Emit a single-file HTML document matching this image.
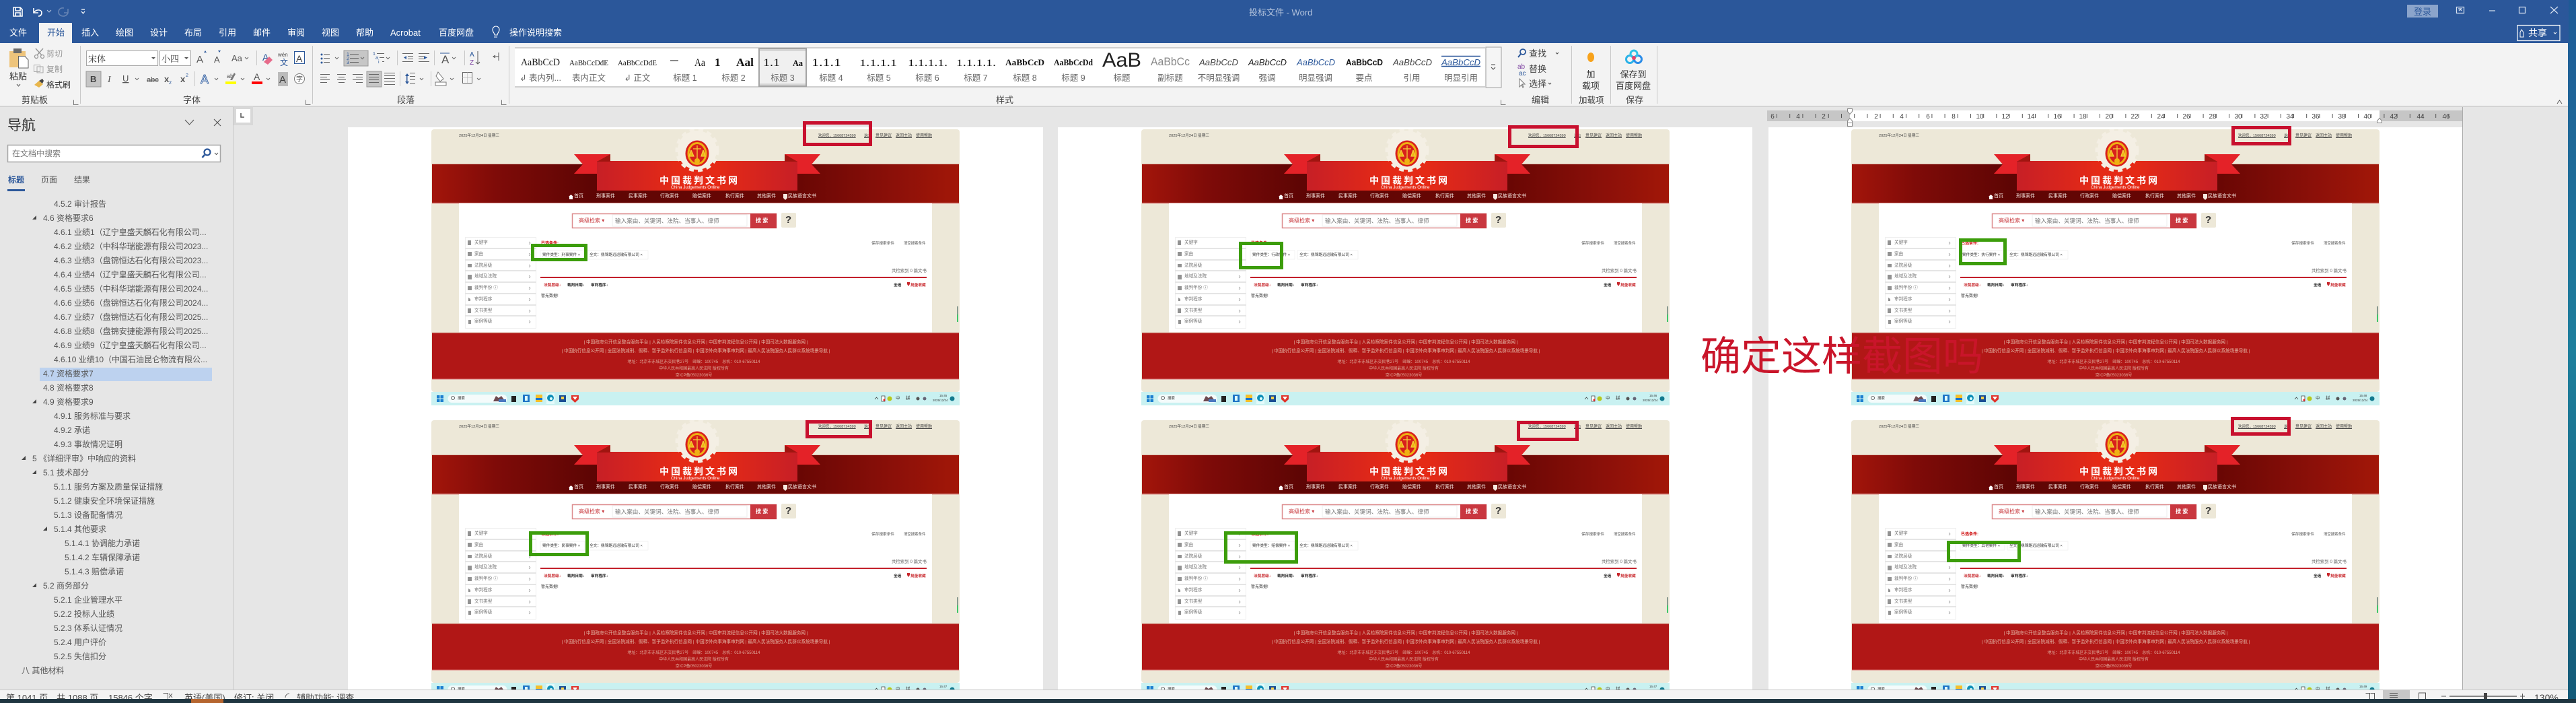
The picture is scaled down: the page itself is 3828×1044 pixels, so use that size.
<!DOCTYPE html>
<html lang="zh-CN"><head><meta charset="utf-8"><title>投标文件 - Word</title>
<style>
html,body{margin:0;padding:0}
body{position:relative;width:3828px;height:1044px;overflow:hidden;background:#e6e6e6;font-family:"Liberation Sans","Noto Sans CJK SC",sans-serif}
.p{position:absolute;top:189px;height:835px;background:#fff}
.k{position:absolute;width:785px;height:410px;filter:blur(.3px)}
.k svg{position:absolute;left:0;top:0}
.k i{position:absolute;white-space:nowrap;font-style:normal;line-height:10px;color:#444}
.a{left:41px;top:5px;font-size:5.6px}
.b{left:575px;top:5px;font-size:5.5px;text-decoration:underline}
.c{left:643px;top:5px;font-size:5px;text-decoration:underline}
.e{left:660px;top:5px;font-size:6px;text-decoration:underline}
.f{left:690px;top:5px;font-size:6px;text-decoration:underline}
.g{left:720px;top:5px;font-size:6px;text-decoration:underline}
.k .h{left:339px;top:71px;font-size:14px;letter-spacing:3px;color:#fff;font-weight:bold}
.k .j{left:356px;top:82px;font-size:6.3px;color:#fff}
.k .n{top:95px;font-size:7px;color:#f6e6e0}
.n1{left:212px}.n2{left:245px}.n3{left:293px}.n4{left:340px}.n5{left:388px}.n6{left:437px}.n7{left:484px}.n8{left:532px}
.k .l{left:219px;top:131px;font-size:8px;color:#c8383d}
.k .m{left:273px;top:131px;font-size:8.6px;color:#777}
.k .o{left:482px;top:131px;font-size:8px;color:#fff;font-weight:bold}
.k .q{left:526px;top:130px;font-size:15px;color:#333;font-weight:bold}
.k .s{left:64px;font-size:6.6px;color:#777}
.s1{top:164px}.s2{top:181px}.s3{top:198px}.s4{top:214px}.s5{top:231px}.s6{top:248px}.s7{top:265px}.s8{top:281px}
.k .r{left:163px;top:165px;font-size:6px;color:#c00;font-weight:bold}
.k .t{left:654px;top:165px;font-size:5.7px;color:#555}
.k .u{left:702px;top:165px;font-size:5.4px;color:#555}
.k .v{left:165px;top:182px;font-size:5.7px;color:#333}
.k .w{left:235px;top:182px;font-size:5.7px;color:#333}
.k .x{left:684px;top:206px;font-size:6.4px;color:#666}
.k .y{top:227px;font-size:5.7px;color:#222;font-weight:bold}
.y1{left:167px;color:#c8282d!important}.y2{left:202px}.y3{left:237px}.y4{left:687px}.y5{left:712px;color:#c8282d!important}
.k .z{left:163px;top:243px;font-size:6px;color:#333}
.k .F{left:0;width:786px;text-align:center;color:#e3b5a5;font-size:6.6px}
.F1{top:312px}.F2{top:325px}
.k .G{top:341px;font-size:6px;left:0;width:780px;text-align:center;color:#dfa89a}.G2{top:351px!important;font-size:6px}.G3{top:361px!important}
.k .T{font-size:5.4px;color:#333}
.T1{left:39px;top:395px}.T2{left:690px;top:395px;font-size:6.5px!important}.T3{left:705px;top:395px;font-size:6.5px!important}.T4{left:755px;top:391px;font-size:4.5px!important}.T5{left:745px;top:398px;font-size:4.5px!important}
.R,.Q{position:absolute;box-sizing:border-box;border:5px solid #c8102e}
.Q{border-color:#3c9d0b}
.big{position:absolute;left:2527px;top:495px;font-size:60px;line-height:70px;color:#c9152a;white-space:nowrap;font-family:"Liberation Sans","Noto Sans CJK SC",sans-serif}
#c{position:absolute;left:0;top:0}
</style></head><body>
<svg width="0" height="0" style="position:absolute"><defs>
<linearGradient id="bd" x1="0" x2="1" y1="0" y2="0"><stop offset="0" stop-color="#a3150b"/><stop offset=".12" stop-color="#7f0b08"/><stop offset=".3" stop-color="#5e0504"/><stop offset=".7" stop-color="#6a0704"/><stop offset=".88" stop-color="#8c1009"/><stop offset="1" stop-color="#a21708"/></linearGradient>
<linearGradient id="bn" x1="0" x2="1" y1="0" y2="0"><stop offset="0" stop-color="#c71f26"/><stop offset=".4" stop-color="#e52a16"/><stop offset=".6" stop-color="#e52a16"/><stop offset="1" stop-color="#c71f26"/></linearGradient>
<g id="S">
<rect width="785" height="390" rx="4" fill="#ede8d8"/>
<rect x="1" y="52" width="783" height="57" fill="url(#bd)"/><rect x="1" y="51" width="783" height="1" fill="#dcbcae"/><rect x="1" y="109" width="783" height="1.5" fill="#da8f8a"/>
<rect x="41" y="110" width="703" height="192" fill="#fff"/>
<path d="M212 37H266V66H212L225 52z" fill="#e42228"/><path d="M578 37H525V66H578L565 52z" fill="#e42228"/>
<rect x="246" y="47" width="298" height="44" fill="url(#bn)"/>
<path d="M246 48L266 37V48z" fill="#a01510"/><path d="M544 48L525 37V48z" fill="#a01510"/>
<circle cx="395" cy="31" r="29" fill="#f4efe4"/><circle cx="395" cy="31" r="30" fill="none" stroke="#f4efe4" stroke-width="5" stroke-dasharray="7 6"/>
<ellipse cx="395" cy="36" rx="17.5" ry="19.5" fill="#d8201c"/><ellipse cx="395" cy="36" rx="13" ry="15.5" fill="#d8201c" stroke="#efb112" stroke-width="3"/>
<path d="M395 24V44M389 29H401M386 31L383 40H390L386 31M404 31L401 40H407L404 31" fill="#efb112" stroke="#f4cf3a" stroke-width="1.3"/><circle cx="395" cy="47" r="4" fill="#efb112"/>
<path d="M204 100l3.5-3 3.5 3h-1v4h-5v-4z" fill="#fff"/><path d="M523 96h6v6l-3 3-3-3z" fill="#f5e8e0"/>
<rect x="209.500" y="125.500" width="303" height="21" fill="#fff" stroke="#dc8a8c" stroke-width="1.5"/><rect x="269" y="127" width="200" height="17" fill="#fff" stroke="#eee"/><rect x="474" y="125" width="39" height="22" fill="#c9373f"/><rect x="520" y="124" width="22" height="22" rx="2" fill="#ede8d8"/>
<path d="M50.500 160.500h105v135h-105z" fill="#fff" stroke="#eee"/>
<path d="M50 177H156M50 194H156M50 210H156M50 227H156M50 244H156M50 261H156M50 277H156" stroke="#e5e5e5" stroke-width="2"/>
<path d="M145 167l2 2-2 2M145 184l2 2-2 2M145 201l2 2-2 2M145 217l2 2-2 2M145 234l2 2-2 2M145 251l2 2-2 2M145 268l2 2-2 2M145 284l2 2-2 2" fill="none" stroke="#888" stroke-width=".7"/>
<path d="M54 165h5v7h-5zM54 182h6v6h-6zM54 200h6v5h-6zM54 216h6v7h-6zM54 233h6v6h-6zM55 250l3 2v3h-3zM54 266h5v7h-5zM55 283h4v6h-4z" fill="#777" opacity=".8"/>
<rect x="162" y="180" width="66" height="13" fill="#fff" stroke="#eee" stroke-width=".7"/><rect x="232" y="180" width="90" height="13" fill="#fff" stroke="#eee" stroke-width=".7"/>
<rect x="162" y="219" width="574" height="2" fill="#c3202b"/>
<path d="M707 227h4v3l-2 3-2-3z" fill="#c8282d"/>
<rect x="781" y="263" width="2" height="12" fill="#8a9a90"/><rect x="781" y="275" width="2" height="11" fill="#3fc76a"/>
<rect x="1" y="302" width="783" height="69" fill="#b11716"/><rect x="1" y="301.500" width="783" height="1" fill="#dba"/><rect x="1" y="370.500" width="783" height="1" fill="#d77"/>
<rect x="-1" y="390" width="787" height="20" fill="#c9f1f1"/>
<path d="M8 395h4.500v4.500H8zM13.500 395H18v4.500h-4.500zM8 400.500h4.500V405H8zM13.500 400.500H18V405h-4.500z" fill="#1c7fd0"/>
<rect x="24.500" y="394" width="88" height="12" rx="6" fill="#f4fbfb"/><circle cx="32" cy="399" r="2.500" fill="none" stroke="#444" stroke-width=".8"/>
<path d="M92 404l4-8 4 3 4-3 6 8z" fill="#6c4a50"/><rect x="100" y="401" width="11" height="4" fill="#4a78c0"/>
<rect x="119" y="396" width="7" height="9" fill="#222"/><rect x="136" y="394" width="10" height="11" fill="#1d74c6"/><rect x="139" y="396" width="4" height="7" fill="#dff"/>
<path d="M155 394h10v11h-10z" fill="#f5bf2c"/><rect x="155" y="399" width="10" height="3" fill="#1d74c6"/>
<rect x="171" y="392" width="12" height="16" fill="#e3fafa"/><circle cx="177" cy="399" r="5" fill="#0f8fb8"/><circle cx="178" cy="400" r="2" fill="#dff"/>
<rect x="190" y="395" width="10" height="10" fill="#1a4f94"/><rect x="193" y="397" width="4" height="4" fill="#ffd34a"/>
<path d="M208 395h11v6l-5.500 5-5.500-5z" fill="#e0332b"/><path d="M210 397h7l-3.500 5z" fill="#fff"/>
<path d="M659 401l2.500-3 2.500 3" fill="none" stroke="#333" stroke-width=".7"/><rect x="669" y="396" width="5" height="8" fill="#fff" stroke="#333" stroke-width=".7"/><circle cx="673" cy="402" r="1.500" fill="#e22"/><circle cx="681" cy="400" r="3.500" fill="#b7c81a"/><circle cx="723" cy="400" r="2.500" fill="#555"/><circle cx="733" cy="400" r="2.500" fill="#667"/><circle cx="774" cy="400" r="3.500" fill="#127a8f"/>
</g></defs></svg>

<div class="p" style="left:517px;width:1033px"></div>
<div class="p" style="left:1572px;width:1032px"></div>
<div class="p" style="left:2628px;width:1031px"></div>

<div class="k" style="left:641px;top:192px"><svg width="785" height="410"><use href="#S"/></svg>
<i class="a">2025年12月24日 星期三</i><i class="b">欢迎您，15668724590</i><i class="c">退出</i><i class="e">意见建议</i><i class="f">返回主站</i><i class="g">使用帮助</i><i class="h">中国裁判文书网</i><i class="j">China Judgements Online</i><i class="n n1">首页</i><i class="n n2">刑事案件</i><i class="n n3">民事案件</i><i class="n n4">行政案件</i><i class="n n5">赔偿案件</i><i class="n n6">执行案件</i><i class="n n7">其他案件</i><i class="n n8" style="left:530px">民族语言文书</i><i class="l">高级检索 ▾</i><i class="m">输入案由、关键词、法院、当事人、律师</i><i class="o">搜 索</i><i class="q">?</i><i class="s s1">关键字</i><i class="s s2">案由</i><i class="s s3">法院层级</i><i class="s s4">地域及法院</i><i class="s s5">裁判年份 ⓘ</i><i class="s s6">审判程序</i><i class="s s7">文书类型</i><i class="s s8">案例等级</i><i class="r">已选条件:</i><i class="t">保存搜索条件</i><i class="u">清空搜索条件</i><i class="v">案件类型：刑事案件 ×</i><i class="w">全文：鼎锦路远运输有限公司 ×</i><i class="x">共检索到 0 篇文书</i><i class="y y1">法院层级↓</i><i class="y y2">裁判日期↓</i><i class="y y3">审判程序↓</i><i class="y y4">全选</i><i class="y y5">批量收藏</i><i class="z">暂无数据!</i><i class="F F1">| 中国政府公开信息整合服务平台 | 人民检察院案件信息公开网 | 中国审判流程信息公开网 | 中国司法大数据服务网 |</i><i class="F F2">| 中国执行信息公开网 | 全国法院减刑、假释、暂予监外执行信息网 | 中国涉外商事海事审判网 | 最高人民法院服务人民群众系统场景导航 |</i><i class="G">地址：北京市东城区东交民巷27号　邮编：100745　总机：010-67550114</i><i class="G G2">中华人民共和国最高人民法院 版权所有</i><i class="G G3">京ICP备05023036号</i><i class="T T1">搜索</i><i class="T T2">中</i><i class="T T3">拼</i><i class="T T4">15:45</i><i class="T T5">2025/12/24</i></div>

<div class="k" style="left:1696px;top:192px"><svg width="785" height="410"><use href="#S"/></svg>
<i class="a">2025年12月24日 星期三</i><i class="b">欢迎您，15668724590</i><i class="c">退出</i><i class="e">意见建议</i><i class="f">返回主站</i><i class="g">使用帮助</i><i class="h">中国裁判文书网</i><i class="j">China Judgements Online</i><i class="n n1">首页</i><i class="n n2">刑事案件</i><i class="n n3">民事案件</i><i class="n n4">行政案件</i><i class="n n5">赔偿案件</i><i class="n n6">执行案件</i><i class="n n7">其他案件</i><i class="n n8" style="left:530px">民族语言文书</i><i class="l">高级检索 ▾</i><i class="m">输入案由、关键词、法院、当事人、律师</i><i class="o">搜 索</i><i class="q">?</i><i class="s s1">关键字</i><i class="s s2">案由</i><i class="s s3">法院层级</i><i class="s s4">地域及法院</i><i class="s s5">裁判年份 ⓘ</i><i class="s s6">审判程序</i><i class="s s7">文书类型</i><i class="s s8">案例等级</i><i class="r">已选条件:</i><i class="t">保存搜索条件</i><i class="u">清空搜索条件</i><i class="v">案件类型：行政案件 ×</i><i class="w">全文：鼎锦路远运输有限公司 ×</i><i class="x">共检索到 0 篇文书</i><i class="y y1">法院层级↓</i><i class="y y2">裁判日期↓</i><i class="y y3">审判程序↓</i><i class="y y4">全选</i><i class="y y5">批量收藏</i><i class="z">暂无数据!</i><i class="F F1">| 中国政府公开信息整合服务平台 | 人民检察院案件信息公开网 | 中国审判流程信息公开网 | 中国司法大数据服务网 |</i><i class="F F2">| 中国执行信息公开网 | 全国法院减刑、假释、暂予监外执行信息网 | 中国涉外商事海事审判网 | 最高人民法院服务人民群众系统场景导航 |</i><i class="G">地址：北京市东城区东交民巷27号　邮编：100745　总机：010-67550114</i><i class="G G2">中华人民共和国最高人民法院 版权所有</i><i class="G G3">京ICP备05023036号</i><i class="T T1">搜索</i><i class="T T2">中</i><i class="T T3">拼</i><i class="T T4">15:46</i><i class="T T5">2025/12/24</i></div>

<div class="k" style="left:2751px;top:192px"><svg width="785" height="410"><use href="#S"/></svg>
<i class="a">2025年12月24日 星期三</i><i class="b">欢迎您，15668724590</i><i class="c">退出</i><i class="e">意见建议</i><i class="f">返回主站</i><i class="g">使用帮助</i><i class="h">中国裁判文书网</i><i class="j">China Judgements Online</i><i class="n n1">首页</i><i class="n n2">刑事案件</i><i class="n n3">民事案件</i><i class="n n4">行政案件</i><i class="n n5">赔偿案件</i><i class="n n6">执行案件</i><i class="n n7">其他案件</i><i class="n n8" style="left:530px">民族语言文书</i><i class="l">高级检索 ▾</i><i class="m">输入案由、关键词、法院、当事人、律师</i><i class="o">搜 索</i><i class="q">?</i><i class="s s1">关键字</i><i class="s s2">案由</i><i class="s s3">法院层级</i><i class="s s4">地域及法院</i><i class="s s5">裁判年份 ⓘ</i><i class="s s6">审判程序</i><i class="s s7">文书类型</i><i class="s s8">案例等级</i><i class="r">已选条件:</i><i class="t">保存搜索条件</i><i class="u">清空搜索条件</i><i class="v">案件类型：执行案件 ×</i><i class="w">全文：鼎锦路远运输有限公司 ×</i><i class="x">共检索到 0 篇文书</i><i class="y y1">法院层级↓</i><i class="y y2">裁判日期↓</i><i class="y y3">审判程序↓</i><i class="y y4">全选</i><i class="y y5">批量收藏</i><i class="z">暂无数据!</i><i class="F F1">| 中国政府公开信息整合服务平台 | 人民检察院案件信息公开网 | 中国审判流程信息公开网 | 中国司法大数据服务网 |</i><i class="F F2">| 中国执行信息公开网 | 全国法院减刑、假释、暂予监外执行信息网 | 中国涉外商事海事审判网 | 最高人民法院服务人民群众系统场景导航 |</i><i class="G">地址：北京市东城区东交民巷27号　邮编：100745　总机：010-67550114</i><i class="G G2">中华人民共和国最高人民法院 版权所有</i><i class="G G3">京ICP备05023036号</i><i class="T T1">搜索</i><i class="T T2">中</i><i class="T T3">拼</i><i class="T T4">15:48</i><i class="T T5">2025/12/24</i></div>

<div class="k" style="left:641px;top:624px"><svg width="785" height="410"><use href="#S"/></svg>
<i class="a">2025年12月24日 星期三</i><i class="b">欢迎您，15668724590</i><i class="c">退出</i><i class="e">意见建议</i><i class="f">返回主站</i><i class="g">使用帮助</i><i class="h">中国裁判文书网</i><i class="j">China Judgements Online</i><i class="n n1">首页</i><i class="n n2">刑事案件</i><i class="n n3">民事案件</i><i class="n n4">行政案件</i><i class="n n5">赔偿案件</i><i class="n n6">执行案件</i><i class="n n7">其他案件</i><i class="n n8" style="left:530px">民族语言文书</i><i class="l">高级检索 ▾</i><i class="m">输入案由、关键词、法院、当事人、律师</i><i class="o">搜 索</i><i class="q">?</i><i class="s s1">关键字</i><i class="s s2">案由</i><i class="s s3">法院层级</i><i class="s s4">地域及法院</i><i class="s s5">裁判年份 ⓘ</i><i class="s s6">审判程序</i><i class="s s7">文书类型</i><i class="s s8">案例等级</i><i class="r">已选条件:</i><i class="t">保存搜索条件</i><i class="u">清空搜索条件</i><i class="v">案件类型：民事案件 ×</i><i class="w">全文：鼎锦路远运输有限公司 ×</i><i class="x">共检索到 0 篇文书</i><i class="y y1">法院层级↓</i><i class="y y2">裁判日期↓</i><i class="y y3">审判程序↓</i><i class="y y4">全选</i><i class="y y5">批量收藏</i><i class="z">暂无数据!</i><i class="F F1">| 中国政府公开信息整合服务平台 | 人民检察院案件信息公开网 | 中国审判流程信息公开网 | 中国司法大数据服务网 |</i><i class="F F2">| 中国执行信息公开网 | 全国法院减刑、假释、暂予监外执行信息网 | 中国涉外商事海事审判网 | 最高人民法院服务人民群众系统场景导航 |</i><i class="G">地址：北京市东城区东交民巷27号　邮编：100745　总机：010-67550114</i><i class="G G2">中华人民共和国最高人民法院 版权所有</i><i class="G G3">京ICP备05023036号</i><i class="T T1">搜索</i><i class="T T2">中</i><i class="T T3">拼</i><i class="T T4">15:47</i><i class="T T5">2025/12/24</i></div>

<div class="k" style="left:1696px;top:624px"><svg width="785" height="410"><use href="#S"/></svg>
<i class="a">2025年12月24日 星期三</i><i class="b">欢迎您，15668724590</i><i class="c">退出</i><i class="e">意见建议</i><i class="f">返回主站</i><i class="g">使用帮助</i><i class="h">中国裁判文书网</i><i class="j">China Judgements Online</i><i class="n n1">首页</i><i class="n n2">刑事案件</i><i class="n n3">民事案件</i><i class="n n4">行政案件</i><i class="n n5">赔偿案件</i><i class="n n6">执行案件</i><i class="n n7">其他案件</i><i class="n n8" style="left:530px">民族语言文书</i><i class="l">高级检索 ▾</i><i class="m">输入案由、关键词、法院、当事人、律师</i><i class="o">搜 索</i><i class="q">?</i><i class="s s1">关键字</i><i class="s s2">案由</i><i class="s s3">法院层级</i><i class="s s4">地域及法院</i><i class="s s5">裁判年份 ⓘ</i><i class="s s6">审判程序</i><i class="s s7">文书类型</i><i class="s s8">案例等级</i><i class="r">已选条件:</i><i class="t">保存搜索条件</i><i class="u">清空搜索条件</i><i class="v">案件类型：赔偿案件 ×</i><i class="w">全文：鼎锦路远运输有限公司 ×</i><i class="x">共检索到 0 篇文书</i><i class="y y1">法院层级↓</i><i class="y y2">裁判日期↓</i><i class="y y3">审判程序↓</i><i class="y y4">全选</i><i class="y y5">批量收藏</i><i class="z">暂无数据!</i><i class="F F1">| 中国政府公开信息整合服务平台 | 人民检察院案件信息公开网 | 中国审判流程信息公开网 | 中国司法大数据服务网 |</i><i class="F F2">| 中国执行信息公开网 | 全国法院减刑、假释、暂予监外执行信息网 | 中国涉外商事海事审判网 | 最高人民法院服务人民群众系统场景导航 |</i><i class="G">地址：北京市东城区东交民巷27号　邮编：100745　总机：010-67550114</i><i class="G G2">中华人民共和国最高人民法院 版权所有</i><i class="G G3">京ICP备05023036号</i><i class="T T1">搜索</i><i class="T T2">中</i><i class="T T3">拼</i><i class="T T4">15:47</i><i class="T T5">2025/12/24</i></div>

<div class="k" style="left:2751px;top:624px"><svg width="785" height="410"><use href="#S"/></svg>
<i class="a">2025年12月24日 星期三</i><i class="b">欢迎您，15668724590</i><i class="c">退出</i><i class="e">意见建议</i><i class="f">返回主站</i><i class="g">使用帮助</i><i class="h">中国裁判文书网</i><i class="j">China Judgements Online</i><i class="n n1">首页</i><i class="n n2">刑事案件</i><i class="n n3">民事案件</i><i class="n n4">行政案件</i><i class="n n5">赔偿案件</i><i class="n n6">执行案件</i><i class="n n7">其他案件</i><i class="n n8" style="left:530px">民族语言文书</i><i class="l">高级检索 ▾</i><i class="m">输入案由、关键词、法院、当事人、律师</i><i class="o">搜 索</i><i class="q">?</i><i class="s s1">关键字</i><i class="s s2">案由</i><i class="s s3">法院层级</i><i class="s s4">地域及法院</i><i class="s s5">裁判年份 ⓘ</i><i class="s s6">审判程序</i><i class="s s7">文书类型</i><i class="s s8">案例等级</i><i class="r">已选条件:</i><i class="t">保存搜索条件</i><i class="u">清空搜索条件</i><i class="v">案件类型：其他案件 ×</i><i class="w">全文：鼎锦路远运输有限公司 ×</i><i class="x">共检索到 0 篇文书</i><i class="y y1">法院层级↓</i><i class="y y2">裁判日期↓</i><i class="y y3">审判程序↓</i><i class="y y4">全选</i><i class="y y5">批量收藏</i><i class="z">暂无数据!</i><i class="F F1">| 中国政府公开信息整合服务平台 | 人民检察院案件信息公开网 | 中国审判流程信息公开网 | 中国司法大数据服务网 |</i><i class="F F2">| 中国执行信息公开网 | 全国法院减刑、假释、暂予监外执行信息网 | 中国涉外商事海事审判网 | 最高人民法院服务人民群众系统场景导航 |</i><i class="G">地址：北京市东城区东交民巷27号　邮编：100745　总机：010-67550114</i><i class="G G2">中华人民共和国最高人民法院 版权所有</i><i class="G G3">京ICP备05023036号</i><i class="T T1">搜索</i><i class="T T2">中</i><i class="T T3">拼</i><i class="T T4">15:49</i><i class="T T5">2025/12/24</i></div>

<div class="R" style="left:1193px;top:180px;width:103px;height:37px"></div>
<div class="Q" style="left:789px;top:362px;width:84px;height:26px"></div>
<div class="R" style="left:2241px;top:186px;width:105px;height:34px"></div>
<div class="Q" style="left:1841px;top:359px;width:66px;height:41px"></div>
<div class="R" style="left:3316px;top:187px;width:89px;height:29px"></div>
<div class="Q" style="left:2911px;top:354px;width:71px;height:40px"></div>
<div class="R" style="left:1197px;top:624px;width:99px;height:27px"></div>
<div class="Q" style="left:786px;top:789px;width:89px;height:37px"></div>
<div class="R" style="left:2254px;top:625px;width:92px;height:30px"></div>
<div class="Q" style="left:1819px;top:789px;width:110px;height:48px"></div>
<div class="R" style="left:3315px;top:619px;width:89px;height:28px"></div>
<div class="Q" style="left:2893px;top:803px;width:110px;height:32px"></div>
<div class="big">确定这样截图吗</div>

<svg id="c" width="3828" height="1044" font-family="'Liberation Sans','Noto Sans CJK SC',sans-serif">
<defs><linearGradient id="wp" x1="0" y1="0" x2="0" y2="1"><stop offset="0" stop-color="#1f5a96"/><stop offset=".5" stop-color="#1e7f9c"/><stop offset="1" stop-color="#145a78"/></linearGradient></defs>
<rect x="0" y="158" width="3828" height="31" fill="#e6e6e6" opacity="0"/>
<!-- gray over page top -->
<rect x="3659" y="158" width="1" height="866" fill="#ababab"/>
<rect x="3816" y="0" width="12" height="1044" fill="url(#wp)"/>
<!-- title bar -->
<rect width="3817" height="64" fill="#2b579a"/>
<rect y="64" width="3816" height="94" fill="#f3f3f3"/><rect y="157" width="3816" height="2" fill="#d4d4d4"/>
<rect x="58" y="34" width="49" height="30" fill="#f3f3f3"/>
<g fill="none" stroke="#fff" stroke-width="1.6">
<path d="M20 11H30L33 14V24H20zM23 11V16H30V11M23 24V19H30V24"/>
<path d="M50 12V19H57M50 19C54 13 62 14 62 19C62 22 60 24 57 24"/><path d="M70 15l3 3 3-3" stroke-width="1" stroke="#b8c8e0"/>
<path d="M121 14H126M121 17l2.500 3 2.500-3" stroke-width="1.200"/>
</g>
<path d="M101 13V19H95M95 12C89 11 87 15 87 18C87 22 91 24 94 24C98 24 101 21 101 18" fill="none" stroke="#6684b4" stroke-width="1.6"/>
<g font-size="13" fill="#fff">
<text x="14" y="53">文件</text><text x="70" y="53" fill="#2b579a">开始</text><text x="121" y="53">插入</text><text x="172" y="53">绘图</text><text x="223" y="53">设计</text><text x="274" y="53">布局</text><text x="325" y="53">引用</text><text x="376" y="53">邮件</text><text x="427" y="53">审阅</text><text x="478" y="53">视图</text><text x="529" y="53">帮助</text><text x="580" y="53">Acrobat</text><text x="652" y="53">百度网盘</text><text x="757" y="53">操作说明搜索</text>
</g>
<path d="M734 55h5M735 52c0-3-3-4-3-8a5 5 0 0 1 10 0c0 4-3 5-3 8z" fill="none" stroke="#fff" stroke-width="1.100"/>
<text x="1856" y="23" font-size="13" fill="#b3c3dc">投标文件  -  Word</text>
<rect x="3577" y="7" width="46" height="19" fill="#8ba4cb"/><text x="3587" y="22" font-size="13" fill="#2b579a">登录</text>
<g fill="none" stroke="#dbe4f1" stroke-width="1.200"><path d="M3650.500 10.500h11v9h-11zM3653 13h6M3654 16l2-2 2 2"/><path d="M3699 16h9"/><path d="M3743.500 10.500h9v9h-9z"/><path d="M3790 10l11 10M3801 10l-11 10"/><rect x="3741" y="37.500" width="63" height="23" stroke="#fff"/></g>
<text x="3757" y="54" font-size="14" fill="#fff">共享</text><path d="M3747 44l3 4v7h-5v-7z" fill="none" stroke="#fff"/><path d="M3795 48l2 2 2-2" stroke="#fff" fill="none"/>
<!-- ribbon separators -->
<path d="M119.500 68V154M464.500 68V154M756.500 68V154M2335.500 68V154M2393.500 68V154M2462.500 68V154M381.500 75V97M289.500 106V128M590.500 75V97M645.500 75V97M690.500 75V97M594.500 106V128M640.500 106V128" stroke="#c8c8c8"/>
<!-- clipboard -->
<rect x="14" y="76" width="24" height="24" fill="#eec47b"/><rect x="20" y="72" width="12" height="7" fill="#6b6b6b"/><path d="M27.500 83.500H37L42 89V101H27.500z" fill="#fff" stroke="#666"/>
<text x="14" y="118" font-size="13" fill="#333">粘贴</text>
<path d="M25 125l2.500 3 2.500-3" fill="none" stroke="#555"/>
<path d="M53 72l9 10M64 72l-9 10" stroke="#999" stroke-width="1.500"/><circle cx="54" cy="84" r="2.500" fill="none" stroke="#999" stroke-width="1.300"/><circle cx="63" cy="84" r="2.500" fill="none" stroke="#999" stroke-width="1.300"/>
<path d="M50.500 96.500h9v10h-9zM55 99h9v9h-9z" fill="#f3f3f3" stroke="#aaa"/>
<path d="M51 126l7-6 6 5-6 5z" fill="#e8b64c"/><path d="M58 120l5-3 2 3-2 4z" fill="#444"/>
<text x="69" y="84" font-size="12" fill="#999">剪切</text><text x="69" y="107" font-size="12" fill="#999">复制</text><text x="69" y="130" font-size="12" fill="#333">格式刷</text>
<!-- font -->
<rect x="128.500" y="75.500" width="106" height="22" fill="#fff" stroke="#a6a6a6"/><rect x="237.500" y="75.500" width="46" height="22" fill="#fff" stroke="#a6a6a6"/>
<text x="131" y="92" font-size="13" fill="#333" font-family="'Noto Serif CJK SC',serif">宋体</text><text x="240" y="92" font-size="13" fill="#333" font-family="'Noto Serif CJK SC',serif">小四</text>
<path d="M225 85l3 3 3-3zM274 85l3 3 3-3z" fill="#555"/>
<g font-size="15" fill="#555"><text x="292" y="93">A</text><text x="318" y="93" font-size="13">A</text><text x="344" y="91" font-size="13">Aa</text></g>
<path d="M303 78l2-3 2 3zM324 75l2 3 2-3z" fill="#2b579a"/>
<text x="390" y="90" font-size="14" fill="#2b579a">A</text><path d="M392 92l8-8 5 5-7 7z" fill="#e66a8a"/>
<text x="413" y="84" font-size="8" fill="#444">wén</text><text x="416" y="97" font-size="12" fill="#2b579a">文</text>
<rect x="437.500" y="76.500" width="15" height="18" fill="#fff" stroke="#2b579a"/><text x="440" y="92" font-size="14" fill="#444">A</text>
<rect x="128" y="106" width="22" height="23" fill="#c6c6c6" stroke="#9a9a9a"/><text x="134" y="122" font-size="13" font-weight="bold" fill="#444">B</text>
<text x="160" y="122" font-size="14" font-style="italic" fill="#555" font-family="'Liberation Serif',serif">I</text>
<text x="182" y="121" font-size="13" fill="#555" text-decoration="underline">U</text>
<text x="218" y="122" font-size="11" fill="#555" text-decoration="line-through">abc</text>
<text x="244" y="122" font-size="13" font-weight="bold" fill="#555">x</text><text x="251" y="125" font-size="7" fill="#2b579a">2</text>
<text x="268" y="122" font-size="13" font-weight="bold" fill="#555">x</text><text x="276" y="114" font-size="7" fill="#2b579a">2</text>
<text x="298" y="124" font-size="18" fill="#dbe7f5" stroke="#2b579a" stroke-width=".8">A</text>
<text x="337" y="116" font-size="9" fill="#555">ab</text><path d="M342 119l6-11 2 2-5 9z" fill="#777"/><rect x="335" y="121" width="16" height="4" fill="#ff0"/>
<text x="377" y="119" font-size="14" fill="#555">A</text><rect x="374" y="121" width="16" height="4" fill="#f00"/>
<rect x="413" y="107" width="15" height="21" fill="#bbb"/><text x="415" y="123" font-size="15" fill="#444">A</text>
<circle cx="445" cy="117" r="7.500" fill="#fff" stroke="#777"/><text x="440" y="121" font-size="10" fill="#555">字</text>
<!-- paragraph -->
<rect x="511" y="75" width="36" height="23" fill="#c6c6c6" stroke="#9a9a9a"/><rect x="545" y="106" width="22" height="23" fill="#c6c6c6" stroke="#9a9a9a"/>
<g fill="none" stroke="#666"><path d="M481 80.500h9M481 86.500h9M481 92.500h9M520 80.500h13M520 86.500h13M520 92.500h13M560 79.500h11M564 85.500h7M568 91.500h3M598 79.500h16M606 83.500h8M606 87.500h8M598 91.500h16M622 79.500h16M622 83.500h8M622 87.500h8M622 91.500h16"/>
<path d="M476 110.500h14M476 114.500h10M476 118.500h14M476 122.500h10M501 110.500h13M503 114.500h9M501 118.500h13M503 122.500h9M524 110.500h15M529 114.500h10M524 118.500h15M529 122.500h10M548 110.500h15M548 114.500h15M548 118.500h15M548 122.500h15M571 108.500h16M571 112.500h16M571 116.500h16M571 120.500h16M571 125.500h16M609 108.500h8M609 113.500h8M609 118.500h8M609 123.500h8M687.500 107.500h14v16h-14z" stroke-dasharray="none"/></g>
<g fill="#2b579a"><circle cx="478" cy="81" r="1.500"/><circle cx="478" cy="87" r="1.500"/><circle cx="478" cy="93" r="1.500"/><path d="M604 83l-4 2.500 4 2.500zM630 83l5 2.500-5 2.500z"/><path d="M605 109l-3 4h6zM605 125l-3-4h6z"/><rect x="604" y="112" width="1.500" height="10"/></g>
<g font-size="7" fill="#2b579a"><text x="515" y="83">1</text><text x="515" y="89">2</text><text x="515" y="95">3</text><text x="554" y="82">1</text><text x="558" y="88">a</text><text x="562" y="94">i</text></g>
<text x="656" y="94" font-size="17" fill="#555">A</text><path d="M654 79h14" stroke="#2b579a"/><text x="698" y="84" font-size="10" fill="#2b579a">A</text><text x="698" y="96" font-size="10" fill="#7b3fa0">Z</text><path d="M710 76v19m-3-3l3 3 3-3" fill="none" stroke="#555"/><path d="M741 78v12M741 84h-7m2-2l-3 2 3 2" fill="none" stroke="#555"/>
<path d="M651 107l8 10-5 4-6-8zM647 122h16v5h-16z" fill="#fff" stroke="#777"/><path d="M687.500 115.500h14M694.500 107.500v16" stroke="#aaa" stroke-dasharray="1 1"/>
<path fill="none" stroke="#666" d="M498 85l2.500 2.500L503 85M536 85l2.500 2.500L541 85M574 85l2.500 2.500L579 85M672 85l2.500 2.500L677 85M624 116l2.500 2.500L629 116M669 116l2.500 2.500L674 116M709 116l2.500 2.500L714 116M201 116l2.500 2.500L206 116M319 116l2.500 2.500L324 116M358 116l2.500 2.500L363 116M396 116l2.500 2.500L401 116M364 85l2.500 2.500L369 85"/>
<!-- launchers & group labels -->
<path d="M109.500 148.500v7h7M454.500 148.500v7h7M745.500 148.500v7h7M2230.500 148.500v7h7" fill="none" stroke="#777"/>
<g font-size="13" fill="#444"><text x="32" y="153">剪贴板</text><text x="272" y="153">字体</text><text x="590" y="153">段落</text><text x="1480" y="153">样式</text><text x="2276" y="153">编辑</text><text x="2346" y="153" font-size="12.500">加载项</text><text x="2416" y="153">保存</text></g>
<!-- styles gallery -->
<rect x="765" y="71" width="1442" height="58" fill="#fff"/><path d="M765 71h1442M765 129h1442" stroke="#cfcfcf" stroke-width="2"/>
<rect x="2208" y="70" width="23" height="60" fill="#f5f5f5" stroke="#a0a0a0"/><path d="M2216 96h6M2216 100l3 3 3-3" fill="none" stroke="#444"/>
<rect x="1128" y="72" width="70" height="56" fill="#f0f0f0" stroke="#a4a4a4" stroke-width="2"/><rect x="1129" y="73" width="68" height="3" fill="#d6d6d6"/><rect x="1129" y="124" width="68" height="3" fill="#d6d6d6"/>
<g font-family="'Liberation Serif',serif" fill="#111">
<text x="774" y="97" font-size="15" textLength="58" lengthAdjust="spacingAndGlyphs">AaBbCcD</text>
<text x="846" y="97" font-size="12" textLength="58" lengthAdjust="spacingAndGlyphs">AaBbCcDdE</text>
<text x="918" y="97" font-size="12" textLength="58" lengthAdjust="spacingAndGlyphs">AaBbCcDdE</text>
<text x="1032" y="98" font-size="16" textLength="16" lengthAdjust="spacingAndGlyphs">Aa</text><path d="M996 90h12" stroke="#111"/>
<text x="1062" y="98" font-size="17" font-weight="bold">1</text><text x="1094" y="98" font-size="17" font-weight="bold" textLength="26" lengthAdjust="spacingAndGlyphs">Aal</text>
<text x="1134" y="98" font-size="16" textLength="25" lengthAdjust="spacingAndGlyphs">1.1</text><text x="1178" y="98" font-size="13" font-weight="bold" textLength="15" lengthAdjust="spacingAndGlyphs">Aa</text>
<text x="1206" y="98" font-size="16" textLength="44" lengthAdjust="spacingAndGlyphs">1.1.1</text>
<text x="1277" y="98" font-size="15" textLength="56" lengthAdjust="spacingAndGlyphs">1.1.1.1</text>
<text x="1349" y="98" font-size="15" textLength="59" lengthAdjust="spacingAndGlyphs">1.1.1.1.</text>
<text x="1421" y="98" font-size="15" textLength="59" lengthAdjust="spacingAndGlyphs">1.1.1.1.</text>
<text x="1494" y="97" font-size="13" font-weight="bold" textLength="58" lengthAdjust="spacingAndGlyphs">AaBbCcD</text>
<text x="1566" y="97" font-size="13" font-weight="bold" textLength="58" lengthAdjust="spacingAndGlyphs">AaBbCcDd</text></g>
<g font-family="'Liberation Sans',sans-serif">
<text x="1638" y="99" font-size="30" fill="#222" textLength="58" lengthAdjust="spacingAndGlyphs" font-weight="normal">AaB</text>
<text x="1710" y="97" font-size="17" fill="#888" textLength="58" lengthAdjust="spacingAndGlyphs">AaBbCc</text>
<g font-size="13" font-style="italic">
<text x="1782" y="97" fill="#444" textLength="58" lengthAdjust="spacingAndGlyphs">AaBbCcD</text>
<text x="1855" y="97" fill="#222" textLength="57" lengthAdjust="spacingAndGlyphs">AaBbCcD</text>
<text x="1927" y="97" fill="#2b579a" textLength="57" lengthAdjust="spacingAndGlyphs">AaBbCcD</text>
<text x="2000" y="97" fill="#111" font-weight="bold" font-style="normal" textLength="55" lengthAdjust="spacingAndGlyphs">AaBbCcD</text>
<text x="2070" y="97" fill="#444" textLength="58" lengthAdjust="spacingAndGlyphs">AaBbCcD</text>
<text x="2142" y="97" fill="#2b579a" textLength="58" lengthAdjust="spacingAndGlyphs">AaBbCcD</text></g></g>
<path d="M2142 83.500h58M2142 98.500h58" stroke="#2b579a" stroke-width="1.500"/>
<g font-size="12.500" fill="#666" text-anchor="middle">
<text x="803" y="120">↲ 表内列...</text><text x="875" y="120">表内正文</text><text x="947" y="120">↲ 正文</text><text x="1018" y="120">标题 1</text><text x="1090" y="120">标题 2</text><text x="1163" y="120">标题 3</text><text x="1235" y="120">标题 4</text><text x="1306" y="120">标题 5</text><text x="1378" y="120">标题 6</text><text x="1450" y="120">标题 7</text><text x="1523" y="120">标题 8</text><text x="1595" y="120">标题 9</text><text x="1667" y="120">标题</text><text x="1739" y="120">副标题</text><text x="1811" y="120">不明显强调</text><text x="1883" y="120">强调</text><text x="1955" y="120">明显强调</text><text x="2027" y="120">要点</text><text x="2098" y="120">引用</text><text x="2171" y="120">明显引用</text></g>
<!-- edit -->
<circle cx="2263" cy="77" r="4" fill="none" stroke="#2b579a" stroke-width="1.800"/><path d="M2260 80l-4 5" stroke="#2b579a" stroke-width="2"/>
<text x="2272" y="84" font-size="13" fill="#444">查找</text><path d="M2312 78l2 2 2-2" fill="none" stroke="#444"/>
<text x="2255" y="102" font-size="10" fill="#7b3fa0">ab</text><text x="2257" y="112" font-size="10" fill="#2b579a">ac</text><text x="2272" y="107" font-size="13" fill="#444">替换</text>
<path d="M2258 117v12l3-3 2 4 1-1-2-4h4z" fill="#fff" stroke="#777"/><text x="2272" y="129" font-size="13" fill="#444">选择</text><path d="M2301 123l2 2 2-2" fill="none" stroke="#444"/>
<ellipse cx="2364" cy="85" rx="5" ry="7" fill="#f7a21b"/><text x="2364" y="115" font-size="13" fill="#333" text-anchor="middle">加</text><text x="2364" y="132" font-size="13" fill="#333" text-anchor="middle">载项</text>
<g fill="none" stroke-width="3"><circle cx="2422" cy="88" r="5.500" stroke="#2bb2e8"/><circle cx="2434" cy="88" r="5.500" stroke="#2b8ce8"/><circle cx="2428" cy="80" r="5" stroke="#2fc4e8"/></g><circle cx="2428" cy="86" r="3" fill="#e8446a"/>
<text x="2427" y="115" font-size="13" fill="#333" text-anchor="middle">保存到</text><text x="2427" y="132" font-size="13" fill="#333" text-anchor="middle">百度网盘</text>
<path d="M3800 154l3.500-5 3.500 5" fill="none" stroke="#555"/>
<!-- ruler -->
<rect x="2626" y="164" width="1033" height="16" fill="#fff"/><rect x="2626" y="164" width="123" height="16" fill="#c6c6c6"/><rect x="3536" y="164" width="123" height="16" fill="#c6c6c6"/>
<path d="M2640 172H3650" stroke="#555" stroke-width="6" stroke-dasharray="1 18.200" stroke-dashoffset="0"/>
<g font-size="10" fill="#444" text-anchor="middle"><text x="2634" y="176">6</text><text x="2672" y="176">4</text><text x="2710" y="176">2</text><text x="2788" y="176">2</text><text x="2826" y="176">4</text><text x="2865" y="176">6</text><text x="2903" y="176">8</text><text x="2942" y="176">10</text><text x="2980" y="176">12</text><text x="3018" y="176">14</text><text x="3057" y="176">16</text><text x="3095" y="176">18</text><text x="3134" y="176">20</text><text x="3172" y="176">22</text><text x="3211" y="176">24</text><text x="3249" y="176">26</text><text x="3288" y="176">28</text><text x="3326" y="176">30</text><text x="3364" y="176">32</text><text x="3403" y="176">34</text><text x="3441" y="176">36</text><text x="3480" y="176">38</text><text x="3518" y="176">40</text><text x="3557" y="176">42</text><text x="3597" y="176">44</text><text x="3635" y="176">46</text></g>
<path d="M2745.500 161.500h7v4l-3.500 4-3.500-4zM2745.500 179.500l3.500-4 3.500 4v3h-7zM2745.500 182.500h7v5h-7zM3532.500 179.500l3.500-4 3.500 4v3h-7z" fill="#fff" stroke="#888"/>
<rect x="347" y="158" width="29" height="28" fill="#d8d8d8"/><rect x="351" y="162" width="21" height="20" fill="#fff"/><path d="M358 168v6h5" fill="none" stroke="#555" stroke-width="1.500"/>
<!-- nav panel -->
<rect y="159" width="346" height="865" fill="#e6e6e6"/><rect x="346" y="159" width="1" height="865" fill="#c8c8c8"/>
<text x="11" y="193" font-size="21" fill="#333">导航</text>
<path d="M275 178l6.500 7 6.500-7M318 177l10 10M328 177l-10 10" fill="none" stroke="#555" stroke-width="1.100"/>
<rect x="11.500" y="215.500" width="316" height="25" fill="#fff" stroke="#a6a6a6" stroke-width="1.500"/>
<text x="18" y="232" font-size="12" fill="#777">在文档中搜索</text>
<circle cx="308" cy="226" r="4.500" fill="none" stroke="#2b579a" stroke-width="2.200"/><path d="M304 230l-3.500 4" stroke="#2b579a" stroke-width="2.500"/><path d="M319 227l2.500 2.500 2.500-2.500" fill="none" stroke="#555"/>
<text x="12" y="271" font-size="12" font-weight="bold" fill="#2b579a">标题</text><text x="61" y="271" font-size="12" fill="#555">页面</text><text x="110" y="271" font-size="12" fill="#555">结果</text><rect x="11" y="281" width="26" height="3" fill="#2b579a"/>
<rect x="59" y="546" width="256" height="20" fill="#bdd2ef"/>
<path d="M54 320v6h-6zM54 593v6h-6zM38 677v6h-6zM54 698v6h-6zM70 782v6h-6zM54 866v6h-6z" fill="#444"/>
<g font-size="12" fill="#555">
<text x="80" y="307">4.5.2 审计报告</text><text x="64" y="328">4.6 资格要求6</text>
<text x="80" y="349">4.6.1 业绩1（辽宁皇盛天麟石化有限公司...</text>
<text x="80" y="370">4.6.2 业绩2（中科华瑞能源有限公司2023...</text>
<text x="80" y="391">4.6.3 业绩3（盘锦恒达石化有限公司2023...</text>
<text x="80" y="412">4.6.4 业绩4（辽宁皇盛天麟石化有限公司...</text>
<text x="80" y="433">4.6.5 业绩5（中科华瑞能源有限公司2024...</text>
<text x="80" y="454">4.6.6 业绩6（盘锦恒达石化有限公司2024...</text>
<text x="80" y="475">4.6.7 业绩7（盘锦恒达石化有限公司2025...</text>
<text x="80" y="496">4.6.8 业绩8（盘锦安捷能源有限公司2025...</text>
<text x="80" y="517">4.6.9 业绩9（辽宁皇盛天麟石化有限公司...</text>
<text x="80" y="538">4.6.10 业绩10（中国石油昆仑物流有限公...</text>
<text x="64" y="559">4.7 资格要求7</text><text x="64" y="580">4.8 资格要求8</text><text x="64" y="601">4.9 资格要求9</text>
<text x="80" y="622">4.9.1 服务标准与要求</text><text x="80" y="643">4.9.2 承诺</text><text x="80" y="664">4.9.3 事故情况证明</text>
<text x="48" y="685">5 《详细评审》中响应的资料</text><text x="64" y="706">5.1 技术部分</text>
<text x="80" y="727">5.1.1 服务方案及质量保证措施</text><text x="80" y="748">5.1.2 健康安全环境保证措施</text><text x="80" y="769">5.1.3 设备配备情况</text><text x="80" y="790">5.1.4 其他要求</text>
<text x="96" y="811">5.1.4.1 协调能力承诺</text><text x="96" y="832">5.1.4.2 车辆保障承诺</text><text x="96" y="853">5.1.4.3 赔偿承诺</text>
<text x="64" y="874">5.2 商务部分</text><text x="80" y="895">5.2.1 企业管理水平</text><text x="80" y="916">5.2.2 投标人业绩</text><text x="80" y="937">5.2.3 体系认证情况</text><text x="80" y="958">5.2.4 用户评价</text><text x="80" y="979">5.2.5 失信扣分</text>
<text x="32" y="1000">八 其他材料</text></g>
<!-- status bar -->
<rect y="1024" width="3816" height="14" fill="#f3f3f3"/><rect y="1024" width="3816" height="1" fill="#c6c6c6"/>
<g font-size="13" fill="#444"><text x="9" y="1041">第 1041 页，共 1088 页</text><text x="161" y="1041">15846 个字</text><text x="274" y="1041">英语(美国)</text><text x="348" y="1041">修订: 关闭</text><text x="441" y="1041">辅助功能: 调查</text><text x="3766" y="1041" font-size="14">130%</text></g>
<path d="M242.500 1029.500h7v9M251 1030l5 6M256 1030l-5 6M424 1036a6 6 0 0 1 6-6" fill="none" stroke="#666"/>
<rect x="3541" y="1025" width="40" height="13" fill="#c6c6c6"/>
<path d="M3515.500 1029.500h6v9M3522.500 1029.500h6v9M3551 1029.500h12M3551 1032.500h12M3551 1035.500h12M3594.500 1038v-9h10v9M3628 1034h7M3745 1034h7M3748.500 1030v8" fill="none" stroke="#555"/>
<path d="M3640 1034H3740" stroke="#444" stroke-width="1.200"/><rect x="3691" y="1029" width="5" height="9" fill="#444"/>
<rect y="1038" width="3828" height="6" fill="#1f3540"/><rect x="284" y="1038" width="48" height="6" fill="#b5652f"/>
</svg>
</body></html>
